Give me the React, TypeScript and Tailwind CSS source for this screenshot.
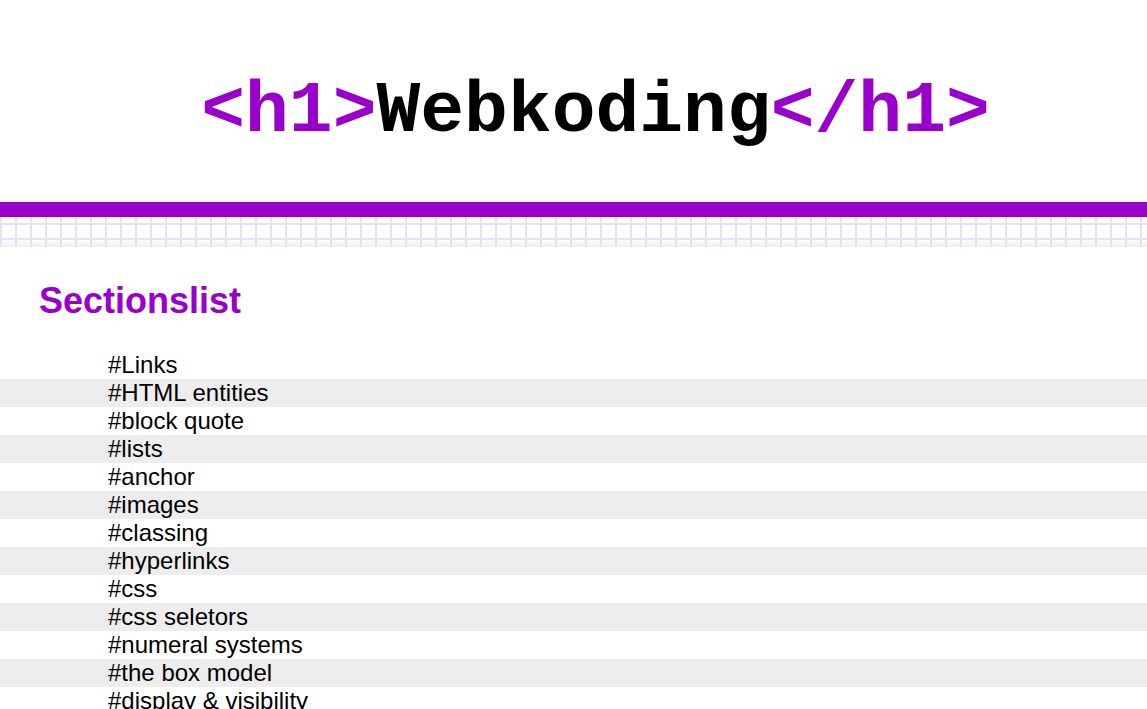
const sections = [
  "#Links",
  "#HTML entities",
  "#block quote",
  "#lists",
  "#anchor",
  "#images",
  "#classing",
  "#hyperlinks",
  "#css",
  "#css seletors",
  "#numeral systems",
  "#the box model",
  "#display & visibility",
];

const App = () => {
  return (
    <div className="w-full min-h-screen bg-white font-['Liberation_Sans',Arial,sans-serif] text-black">
      <header className="h-[202px] pt-[76px] pl-[44px] text-center">
        <h1 className="font-['Courier_New','Liberation_Mono',monospace] text-[73px] leading-[72px] font-bold whitespace-nowrap">
          <span className="text-[#9900cc]">&lt;h1&gt;</span>
          <span>Webkoding</span>
          <span className="text-[#9900cc]">&lt;/h1&gt;</span>
        </h1>
      </header>

      <div className="h-[15px] bg-[#9900cc]"></div>
      <div className="h-[30px] [background-image:linear-gradient(to_right,#e1e1f9_0,#e1e1f9_2px,transparent_2px),linear-gradient(to_bottom,#e1e1f9_0,#e1e1f9_2px,transparent_2px),linear-gradient(to_bottom,#ffffff_0,#ffffff_21px,#f1f1f1_30px)] [background-size:15px_100%,100%_15px,100%_100%] [background-position:0_0,0_6px,0_0]"></div>

      <main className="pt-[33px]">
        <h2 className="pl-[39px] text-[36px] leading-[41px] font-bold text-[#9900cc]">
          Sectionslist
        </h2>
        <ul className="mt-[30px]">
          {sections.map((s, i) => (
            <li
              key={s}
              className={
                i % 2 === 1
                  ? "pl-[108px] h-[28px] text-[24px] leading-[28px] bg-[#ededed]"
                  : "pl-[108px] h-[28px] text-[24px] leading-[28px] bg-white"
              }
            >
              {s}
            </li>
          ))}
        </ul>
      </main>
    </div>
  );
};

export default App;
